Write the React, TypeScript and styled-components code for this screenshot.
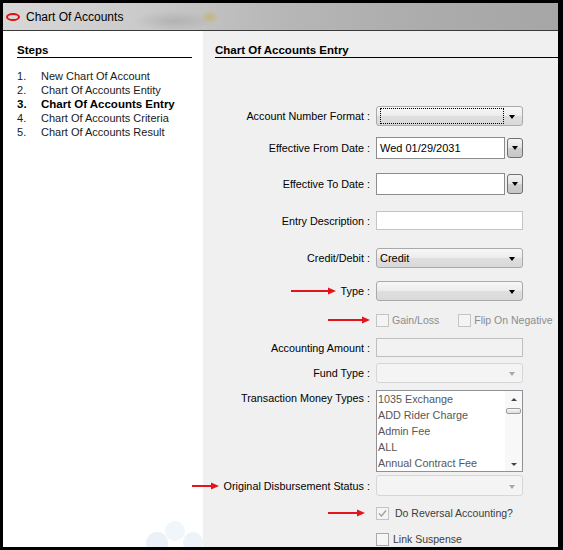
import React from "react";
import styled, { createGlobalStyle } from "styled-components";

const GlobalStyle = createGlobalStyle`
  html, body { margin: 0; padding: 0; background: #000; }
  body {
    font-family: "Liberation Sans", Arial, sans-serif;
    font-size: 11px;
    color: #000;
  }
  * { box-sizing: border-box; }
`;

const Window = styled.div`
  width: 563px;
  height: 550px;
  background: #000;
  padding: 3px 5px 3px 3px;
  display: flex;
  flex-direction: column;
  overflow: hidden;
`;

const TitleBar = styled.div`
  height: 28px;
  flex: none;
  display: flex;
  align-items: center;
  gap: 6px;
  padding-left: 3px;
  border-bottom: 1px solid #3a3a3a;
  font-size: 12px;
  background:
    radial-gradient(ellipse 9px 7px at 207px 14px, rgba(200, 170, 60, 0.5), rgba(200, 170, 60, 0) 100%),
    radial-gradient(ellipse 40px 10px at 170px 18px, rgba(120, 120, 120, 0.25), rgba(120, 120, 120, 0) 100%),
    linear-gradient(90deg, #d8d8d8 0%, #cacaca 25%, #b7b7b7 50%, #acacac 75%, #a6a6a6 100%);
`;

const TitleIcon = styled.span`
  width: 14px;
  height: 8px;
  border: 2px solid #e01010;
  border-radius: 50%;
  flex: none;
`;

const Body = styled.div`
  flex: 1;
  display: flex;
  min-height: 0;
  overflow: hidden;
`;

const LeftPanel = styled.div`
  width: 200px;
  flex: none;
  background: #fff;
  padding: 12px 11px 0 14px;
  position: relative;
  overflow: hidden;
`;

const RightPanel = styled.div`
  flex: 1;
  background: #f0f0f0;
  padding: 12px 0 0 12px;
`;

const Heading = styled.div`
  font-weight: bold;
  font-size: 11.5px;
  line-height: 14px;
  border-bottom: 1px solid #000;
`;

const StepList = styled.ol`
  list-style: none;
  margin: 11px 0 0;
  padding: 0;
`;

const StepItem = styled.li<{ $active?: boolean }>`
  display: flex;
  line-height: 14px;
  font-weight: ${(p) => (p.$active ? "bold" : "normal")};
  font-size: ${(p) => (p.$active ? "11.5px" : "11px")};
  color: ${(p) => (p.$active ? "#000" : "#1a1a1a")};
`;

const StepNum = styled.span`
  width: 24px;
  flex: none;
`;

const Bubbles = styled.svg`
  position: absolute;
  right: 0;
  bottom: 0;
`;

const Form = styled.div`
  display: flex;
  flex-direction: column;
  margin-top: 48px;
`;

const Row = styled.div<{ $mt?: number; $top?: boolean }>`
  display: grid;
  grid-template-columns: 155px 147px;
  column-gap: 6px;
  align-items: ${(p) => (p.$top ? "start" : "center")};
  margin-top: ${(p) => p.$mt ?? 0}px;
`;

const Label = styled.div`
  text-align: right;
  white-space: nowrap;
  font-size: 10.8px;
  line-height: 14px;
  display: flex;
  justify-content: flex-end;
  align-items: center;
`;

const LabelText = styled.span`
  position: relative;
`;

const ArrowSvg = styled.svg<{ $gap?: number; $float?: boolean }>`
  display: block;
  flex: none;
  ${(p) =>
    p.$float
      ? `position: absolute; top: 50%; margin-top: -4px; right: calc(100% + ${p.$gap ?? 5}px);`
      : `margin-right: ${p.$gap ?? 0}px;`}
`;

const Combo = styled.div<{ $disabled?: boolean }>`
  height: 20px;
  border: 1px solid ${(p) => (p.$disabled ? "#d6d6d6" : "#a9a9a9")};
  border-radius: 3px;
  background: ${(p) =>
    p.$disabled
      ? "#f4f4f4"
      : "linear-gradient(#f7f7f7, #ececec 50%, #dfdfdf 51%, #d9d9d9)"};
  display: flex;
  align-items: center;
  padding: 0 7px 0 3px;
`;

const ComboText = styled.span`
  flex: 1;
  line-height: 14px;
`;

const FocusRect = styled.span`
  flex: none;
  width: 124px;
  align-self: stretch;
  margin: 1px 5px 1px 0;
  border: 1px dotted #000;
`;

const ComboArrow = styled.span<{ $disabled?: boolean }>`
  margin-left: auto;
  width: 0;
  height: 0;
  border-left: 3.5px solid transparent;
  border-right: 3.5px solid transparent;
  border-top: 4px solid ${(p) => (p.$disabled ? "#a8a8a8" : "#000")};
  margin-top: 2px;
`;

const ButtonArrow = styled.span`
  width: 0;
  height: 0;
  border-left: 3.5px solid transparent;
  border-right: 3.5px solid transparent;
  border-top: 4px solid #000;
`;

const DateWrap = styled.div`
  display: flex;
  align-items: center;
  gap: 2px;
`;

const DateInput = styled.div`
  width: 130px;
  height: 22px;
  background: #fff;
  border: 1px solid #8b8c8d;
  padding-left: 3px;
  display: flex;
  align-items: center;
`;

const DateButton = styled.div`
  width: 16px;
  height: 20px;
  border: 1px solid #707070;
  border-radius: 3px;
  background: linear-gradient(#f4f4f4, #e2e2e2 50%, #cfcfcf 51%, #c6c6c6);
  display: flex;
  align-items: center;
  justify-content: center;
`;

const TextInput = styled.div<{ $disabled?: boolean }>`
  height: 19px;
  background: ${(p) => (p.$disabled ? "#f2f2f2" : "#fff")};
  border: 1px solid ${(p) => (p.$disabled ? "#bfbfbf" : "#c3c4c6")};
`;

const ListBox = styled.div`
  height: 82px;
  border: 1px solid #8e9196;
  background: #fff;
  display: flex;
`;

const ListItems = styled.div`
  flex: 1;
  padding: 0 1px;
  color: #575757;
  font-size: 10.8px;
`;

const ListItem = styled.div`
  line-height: 16px;
  white-space: nowrap;
`;

const ScrollBar = styled.div`
  width: 17px;
  flex: none;
  background: #f8f8f8;
  display: flex;
  flex-direction: column;
  align-items: center;
  padding: 7px 0 5px;
`;

const ScrollArrow = styled.span<{ $up?: boolean }>`
  width: 0;
  height: 0;
  border-left: 3px solid transparent;
  border-right: 3px solid transparent;
  ${(p) => (p.$up ? "border-bottom: 3px solid #444;" : "border-top: 3px solid #444;")}
`;

const Thumb = styled.span`
  width: 15px;
  height: 6px;
  margin-top: 7px;
  border: 1px solid #9d9d9d;
  border-radius: 2px;
  background: linear-gradient(#fafafa, #dcdcdc);
`;

const Spacer = styled.span`
  flex: 1;
`;

const CheckGroup = styled.div`
  display: flex;
  align-items: center;
  white-space: nowrap;
  gap: 19px;
`;

const CheckItem = styled.label<{ $muted?: boolean; $gap?: number }>`
  display: flex;
  align-items: center;
  white-space: nowrap;
  gap: ${(p) => p.$gap ?? 3}px;
  font-size: 10.5px;
  line-height: 14px;
  color: ${(p) => (p.$muted ? "#8c8c8c" : "#3c3c3c")};
`;

const Box = styled.span<{ $dim?: boolean }>`
  width: 13px;
  height: 13px;
  flex: none;
  border: 1px solid ${(p) => (p.$dim ? "#c4c4c4" : "#a9a9a9")};
  background: ${(p) => (p.$dim ? "#f4f4f4" : "#f6f6f6")};
  display: flex;
  align-items: center;
  justify-content: center;
`;

const Arrow: React.FC<{ w: number; gap?: number; float?: boolean }> = ({ w, gap, float }) => (
  <ArrowSvg $gap={gap} $float={float} width={w} height={8} viewBox={`0 0 ${w} 8`}>
    <line x1={0} y1={4} x2={w - 6} y2={4} stroke="#e3141b" strokeWidth={2} />
    <polygon points={`${w - 8},0.5 ${w},4 ${w - 8},7.5`} fill="#e3141b" />
  </ArrowSvg>
);

const Check: React.FC<{ label: string; checked?: boolean; dim?: boolean; muted?: boolean; gap?: number }> = ({
  label,
  checked,
  dim,
  muted,
  gap,
}) => (
  <CheckItem $muted={muted} $gap={gap}>
    <Box $dim={dim}>
      {checked && (
        <svg width={9} height={9} viewBox="0 0 9 9">
          <path d="M1 4.5 L3.5 7 L8 1.5" fill="none" stroke="#a0a0a0" strokeWidth={1.3} />
        </svg>
      )}
    </Box>
    {label}
  </CheckItem>
);

const steps = [
  "New Chart Of Account",
  "Chart Of Accounts Entity",
  "Chart Of Accounts Entry",
  "Chart Of Accounts Criteria",
  "Chart Of Accounts Result",
];

const moneyTypes = ["1035 Exchange", "ADD Rider Charge", "Admin Fee", "ALL", "Annual Contract Fee"];

const App: React.FC = () => (
  <>
    <GlobalStyle />
    <Window>
      <TitleBar>
        <TitleIcon />
        <span>Chart Of Accounts</span>
      </TitleBar>
      <Body>
        <LeftPanel>
          <Heading>Steps</Heading>
          <StepList>
            {steps.map((s, i) => (
              <StepItem key={s} $active={i === 2}>
                <StepNum>{i + 1}.</StepNum>
                {s}
              </StepItem>
            ))}
          </StepList>
          <Bubbles width={60} height={32} viewBox="0 0 60 32">
            <circle cx={14} cy={28} r={11} fill="#eaf1f9" />
            <circle cx={32} cy={16} r={10} fill="#f1f6fb" />
            <circle cx={50} cy={27} r={10} fill="#edf3fa" />
          </Bubbles>
        </LeftPanel>
        <RightPanel>
          <Heading>Chart Of Accounts Entry</Heading>
          <Form>
            <Row>
              <Label>Account Number Format :</Label>
              <Combo>
                <FocusRect />
                <ComboArrow />
              </Combo>
            </Row>
            <Row $mt={11}>
              <Label>Effective From Date :</Label>
              <DateWrap>
                <DateInput>Wed 01/29/2031</DateInput>
                <DateButton>
                  <ButtonArrow />
                </DateButton>
              </DateWrap>
            </Row>
            <Row $mt={14}>
              <Label>Effective To Date :</Label>
              <DateWrap>
                <DateInput />
                <DateButton>
                  <ButtonArrow />
                </DateButton>
              </DateWrap>
            </Row>
            <Row $mt={16}>
              <Label>Entry Description :</Label>
              <TextInput />
            </Row>
            <Row $mt={18}>
              <Label>Credit/Debit :</Label>
              <Combo>
                <ComboText>Credit</ComboText>
                <ComboArrow />
              </Combo>
            </Row>
            <Row $mt={13}>
              <Label>
                <LabelText>
                  <Arrow w={45} float />
                  Type :
                </LabelText>
              </Label>
              <Combo>
                <ComboArrow />
              </Combo>
            </Row>
            <Row $mt={12}>
              <Label>
                <Arrow w={42} />
              </Label>
              <CheckGroup>
                <Check label="Gain/Loss" dim muted />
                <Check label="Flip On Negative" dim muted />
              </CheckGroup>
            </Row>
            <Row $mt={11}>
              <Label>Accounting Amount :</Label>
              <TextInput $disabled />
            </Row>
            <Row $mt={6}>
              <Label>Fund Type :</Label>
              <Combo $disabled>
                <ComboArrow $disabled />
              </Combo>
            </Row>
            <Row $mt={7} $top>
              <Label style={{ paddingTop: 1 }}>Transaction Money Types :</Label>
              <ListBox>
                <ListItems>
                  {moneyTypes.map((m) => (
                    <ListItem key={m}>{m}</ListItem>
                  ))}
                </ListItems>
                <ScrollBar>
                  <ScrollArrow $up />
                  <Thumb />
                  <Spacer />
                  <ScrollArrow />
                </ScrollBar>
              </ListBox>
            </Row>
            <Row $mt={3}>
              <Label>
                <LabelText>
                  <Arrow w={27} float />
                  Original Disbursement Status :
                </LabelText>
              </Label>
              <Combo $disabled style={{ height: 21 }}>
                <ComboArrow $disabled />
              </Combo>
            </Row>
            <Row $mt={10}>
              <Label>
                <Arrow w={37} gap={5} />
              </Label>
              <Check label="Do Reversal Accounting?" checked dim gap={6} />
            </Row>
            <Row $mt={12}>
              <Label />
              <Check label="Link Suspense" gap={4} />
            </Row>
          </Form>
        </RightPanel>
      </Body>
    </Window>
  </>
);

export default App;
